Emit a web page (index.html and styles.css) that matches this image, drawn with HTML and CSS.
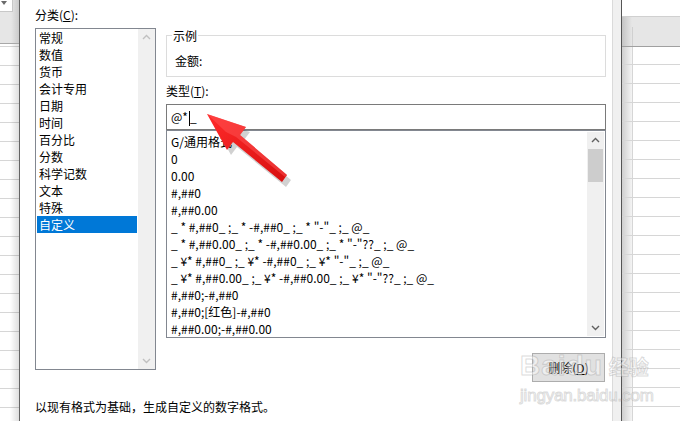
FILE: index.html
```html
<!DOCTYPE html>
<html lang="zh-CN">
<head>
<meta charset="utf-8">
<title>设置单元格格式</title>
<link rel="stylesheet" href="styles.css">
</head>
<body>
<div class="screen">
  <div class="sheet-left">
    <div class="sl-top"><div class="dd"><span class="tri"></span></div></div>
    <div class="sl-rows"></div>
  </div>

  <div class="dialog">
    <div class="main">
      <div class="col-left">
        <div class="label">分类(<u>C</u>):</div>
        <div class="listbox cat">
          <ul class="items">
            <li>常规</li>
            <li>数值</li>
            <li>货币</li>
            <li>会计专用</li>
            <li>日期</li>
            <li>时间</li>
            <li>百分比</li>
            <li>分数</li>
            <li>科学记数</li>
            <li>文本</li>
            <li>特殊</li>
            <li class="sel">自定义</li>
          </ul>
          <div class="vscroll off">
            <span class="sbtn"><svg width="17" height="17" viewBox="0 0 17 17"><path d="M5 10 L8.5 6.5 L12 10" fill="none" stroke="currentColor" stroke-width="1.4"/></svg></span>
            <span class="track"></span>
            <span class="sbtn"><svg width="17" height="17" viewBox="0 0 17 17"><path d="M5 7 L8.5 10.5 L12 7" fill="none" stroke="currentColor" stroke-width="1.4"/></svg></span>
          </div>
        </div>
      </div>

      <div class="col-right">
        <div class="sample">
          <span class="legend">示例</span>
          <div class="sample-val">金额:</div>
        </div>
        <div class="label type-label">类型(<u>T</u>):</div>
        <div class="input">@*<span class="caret"></span>_</div>
        <div class="listbox fmt">
          <ul class="items">
            <li>G/通用格式</li>
            <li>0</li>
            <li>0.00</li>
            <li>#,##0</li>
            <li>#,##0.00</li>
            <li>_ * #,##0_ ;_ * -#,##0_ ;_ * "-"_ ;_ @_</li>
            <li>_ * #,##0.00_ ;_ * -#,##0.00_ ;_ * "-"??_ ;_ @_</li>
            <li>_ ¥* #,##0_ ;_ ¥* -#,##0_ ;_ ¥* "-"_ ;_ @_</li>
            <li>_ ¥* #,##0.00_ ;_ ¥* -#,##0.00_ ;_ ¥* "-"??_ ;_ @_</li>
            <li>#,##0;-#,##0</li>
            <li>#,##0;[红色]-#,##0</li>
            <li>#,##0.00;-#,##0.00</li>
          </ul>
          <div class="vscroll">
            <span class="sbtn"><svg width="17" height="17" viewBox="0 0 17 17"><path d="M5 10 L8.5 6.5 L12 10" fill="none" stroke="currentColor" stroke-width="1.4"/></svg></span>
            <span class="track"><span class="thumb"></span></span>
            <span class="sbtn"><svg width="17" height="17" viewBox="0 0 17 17"><path d="M5 7 L8.5 10.5 L12 7" fill="none" stroke="currentColor" stroke-width="1.4"/></svg></span>
          </div>
        </div>
        <div class="btnrow"><button class="btn">删除(<u>D</u>)</button></div>
      </div>
    </div>
    <div class="desc">以现有格式为基础，生成自定义的数字格式。</div>
  </div>

  <div class="sheet-right">
    <div class="frame"></div>
    <div class="sheet">
      <div class="sh-top"></div>
      <div class="sh-hdr"><div class="rh"></div><div class="ch"></div></div>
      <div class="sh-rows"><div class="rh"></div><div class="ch"></div></div>
    </div>
  </div>
</div>

<svg class="arrow" width="680" height="421" viewBox="0 0 680 421">
  <defs>
    <linearGradient id="ag" x1="0" y1="0" x2="1" y2="1">
      <stop offset="0" stop-color="#ff2a2a"/>
      <stop offset="1" stop-color="#d70f0f"/>
    </linearGradient>
  </defs>
  <polygon points="211,119 250,132 244,140 291,180 286,187 237,147 231,155" fill="#000" opacity="0.18"/>
  <polygon points="207,114 246,127 240,135 287,175 282,182 233,142 227,150" fill="url(#ag)"/>
  <polygon points="207,114 246,127 240,135 287,175 285,177 236,137 226,132" fill="#ff5a5a" opacity="0.45"/>
</svg>

<div class="watermark">
  <div class="wm-main"><span class="wm-b">Baidu</span><span class="wm-j">经验</span></div>
  <div class="wm-url">jingyan.baidu.com</div>
</div>
</body>
</html>
```

FILE: styles.css
```css
* { box-sizing: border-box; }
html, body { margin: 0; padding: 0; }
body {
  width: 680px;
  height: 421px;
  overflow: hidden;
  background: #fff;
  font-family: "Noto Sans CJK SC", "Microsoft YaHei", sans-serif;
  font-size: 12px;
  color: #000;
  position: relative;
}
u { text-decoration: underline; text-underline-offset: 1px; }

.screen { display: flex; height: 421px; }

/* left spreadsheet fragment */
.sheet-left { width: 19px; display: flex; flex-direction: column; }
.sl-top {
  height: 44px;
  background: linear-gradient(to right, rgba(0,0,0,0) 11px, rgba(0,0,0,0.12)), #e6e6e6;
  border-bottom: 1px solid #a8a8a8;
}
.dd {
  width: 13px; height: 12px;
  background: #fff;
  border-right: 1px solid #c8c8c8;
  border-bottom: 1px solid #c8c8c8;
  padding: 1px 0 0 1px;
}
.tri {
  display: block; width: 0; height: 0;
  border-left: 3px solid transparent;
  border-right: 3px solid transparent;
  border-top: 4px solid #6a6a6a;
}
.sl-rows {
  flex: 1;
  background:
    linear-gradient(to right, rgba(0,0,0,0) 10px, rgba(0,0,0,0.13)),
    repeating-linear-gradient(to bottom, transparent 0 2px, #d6d6d6 2px 3px, transparent 3px 19px),
    #fff;
}

/* dialog */
.dialog {
  width: 593px;
  border-left: 1px solid #646464;
  background: #fff;
  padding: 6px 0 5px 15px;
  display: flex;
  flex-direction: column;
}
.main { display: flex; gap: 10px; }
.col-left { width: 121px; }
.col-right { width: 440px; }
.label { height: 18px; line-height: 18px; margin-bottom: 4px; white-space: nowrap; }

.listbox { border: 1px solid #828790; display: flex; background: #fff; }
.items { flex: 1; list-style: none; margin: 0; min-width: 0; overflow: hidden; }
.items li { height: 17px; line-height: 17px; white-space: nowrap; }

.cat { height: 342px; }
.cat .items { padding: 0 1px; }
.cat .items li { padding-left: 2px; }
.cat .items li.sel { background: #0078d7; color: #fff; }

.vscroll {
  width: 17px;
  flex: none;
  background: #f0f0f0;
  display: flex;
  flex-direction: column;
  color: #606060;
}
.vscroll.off { color: #c0c0c0; }
.sbtn { height: 17px; flex: none; display: block; }
.sbtn svg { display: block; }
.track { flex: 1; display: block; }
.thumb { display: block; height: 33px; margin: 0 1px; background: #cdcdcd; }

.sample {
  margin-top: 29px;
  height: 42px;
  border: 1px solid #dcdcdc;
}
.legend {
  display: block;
  width: fit-content;
  margin: -7px 0 0 5px;
  padding: 0 1px;
  line-height: 14px;
  background: #fff;
}
.sample-val { margin-top: 9px; padding-left: 8px; line-height: 18px; }
.type-label { margin-top: 5px; }

.input {
  height: 26px;
  border: 1px solid #7a7a7a;
  padding-left: 4px;
  line-height: 24px;
  white-space: nowrap;
}
.caret {
  display: inline-block;
  width: 1px;
  height: 15px;
  background: #000;
  vertical-align: -4px;
  margin-left: 1px;
}

.fmt { height: 208px; padding: 1px; }
.fmt .items { padding: 1px 0 0 0; }
.fmt .items li { padding-left: 3px; }

.btnrow { display: flex; justify-content: flex-end; margin-top: 15px; padding-right: 1px; }
.btn {
  width: 73px;
  height: 29px;
  background: #e1e1e1;
  border: 1px solid #adadad;
  font: inherit;
  color: #000;
  padding: 0;
}

.desc { margin-top: auto; line-height: 18px; white-space: nowrap; }

/* right spreadsheet fragment */
.sheet-right { flex: 1; display: flex; }
.frame {
  width: 10px;
  background: #f0f0f0;
  border-left: 1px solid #dadada;
  border-right: 1px solid #555;
}
.sheet { flex: 1; display: flex; flex-direction: column; }
.sh-top { height: 17px; background: #fff; border-bottom: 1px solid #d0d0d0; }
.sh-hdr {
  height: 30px;
  display: flex;
  background: #e6e6e6;
  border-bottom: 1px solid #a0a0a0;
}
.sh-hdr .rh { width: 10px; background: linear-gradient(to right, #c4c4c4, #e6e6e6); }
.sh-hdr .ch { flex: 1; border-left: 1px solid #d0d0d0; margin-top: 10px; }
.sh-rows { flex: 1; display: flex; }
.sh-rows .rh,
.sh-rows .ch {
  background:
    repeating-linear-gradient(to bottom, transparent 0 17px, #d6d6d6 17px 18px, transparent 18px 19px);
}
.sh-rows .rh {
  width: 10px;
  background:
    repeating-linear-gradient(to bottom, transparent 0 17px, #d6d6d6 17px 18px, transparent 18px 19px),
    linear-gradient(to right, #cfcfcf, #f4f4f4);
}
.sh-rows .ch { flex: 1; border-left: 1px solid #d6d6d6; }

/* overlays */
.arrow { position: absolute; left: 0; top: 0; pointer-events: none; }
.watermark {
  position: absolute;
  left: 520px;
  top: 346px;
  color: rgba(255,255,255,0.45);
  -webkit-text-stroke: 1px rgba(150,150,150,0.35);
  font-family: "Liberation Sans", Arial, sans-serif;
  pointer-events: none;
}
.wm-main { display: flex; align-items: baseline; gap: 6px; line-height: 40px; }
.wm-b { font-size: 28px; font-weight: bold; letter-spacing: 1px; }
.wm-j { font-family: "Noto Sans CJK SC", sans-serif; font-size: 20px; font-weight: bold; }
.wm-url { font-size: 17px; line-height: 18px; letter-spacing: -0.2px; }
```
